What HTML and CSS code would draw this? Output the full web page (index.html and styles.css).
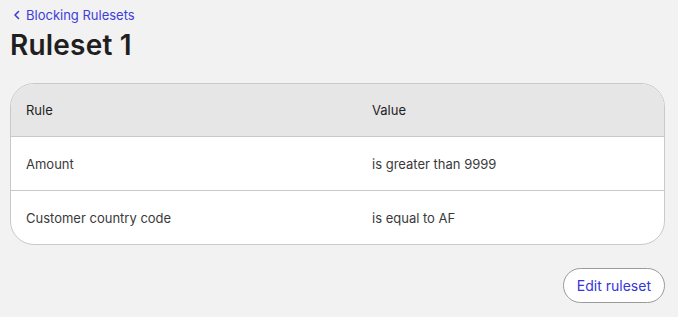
FILE: index.html
```html
<!DOCTYPE html>
<html lang="en">
<head>
    <meta charset="UTF-8">
    <meta name="viewport" content="width=device-width, initial-scale=1.0">
    <title>Ruleset 1</title>
    <link rel="stylesheet" href="styles.css">
</head>
<body>
    <div class="page">
        <a class="back-link" href="#">
            <svg class="back-icon" width="8" height="10" viewBox="0 0 8 10"><path d="M5.5 1.5 L2 5 L5.5 8.5" fill="none" stroke="currentColor" stroke-width="1.6" stroke-linecap="round" stroke-linejoin="round"/></svg>
            Blocking Rulesets
        </a>
        <h1 class="title">Ruleset 1</h1>

        <div class="rules-card">
            <div class="rules-row rules-head">
                <div class="cell">Rule</div>
                <div class="cell">Value</div>
            </div>
            <div class="rules-row">
                <div class="cell">Amount</div>
                <div class="cell">is greater than 9999</div>
            </div>
            <div class="rules-row">
                <div class="cell">Customer country code</div>
                <div class="cell">is equal to AF</div>
            </div>
        </div>

        <div class="actions">
            <button class="button">Edit ruleset</button>
        </div>
    </div>
</body>
</html>
```

FILE: styles.css
```css
body {
    margin: 0;
    padding: 0;
    background-color: #f2f2f2;
    font-family: Inter, "Liberation Sans", Arial, sans-serif;
    color: #222;
}
.page {
    padding: 6px 13px 0 10px;
}
.back-link {
    display: flex;
    align-items: center;
    gap: 5px;
    margin-left: 3px;
    color: #3d3ddb;
    text-decoration: none;
    font-size: 13px;
    line-height: 18px;
}
.title {
    margin: 4px 0 0;
    font-size: 28px;
    line-height: 34px;
    font-weight: 600;
    color: #1f1f1f;
    letter-spacing: 0.2px;
}
.rules-card {
    margin-top: 21px;
    background-color: #fff;
    border: 1px solid #c9c9c9;
    border-radius: 24px;
    overflow: hidden;
}
.rules-row {
    display: grid;
    grid-template-columns: 346px 1fr;
    height: 53px;
    align-items: center;
    border-top: 1px solid #c9c9c9;
    font-size: 13px;
    color: #3a3a3a;
}
.rules-row.rules-head {
    border-top: none;
    height: 52px;
    background-color: #e6e6e6;
    color: #1f1f1f;
    font-weight: 400;
}
.cell {
    padding: 0 15px;
}
.actions {
    display: flex;
    justify-content: flex-end;
    margin-top: 23px;
}
.button {
    font-family: inherit;
    font-size: 14px;
    color: #3535d8;
    background-color: #fff;
    border: 1px solid #9a9a9a;
    border-radius: 18px;
    height: 35px;
    padding: 0 13px;
    cursor: pointer;
}
```
